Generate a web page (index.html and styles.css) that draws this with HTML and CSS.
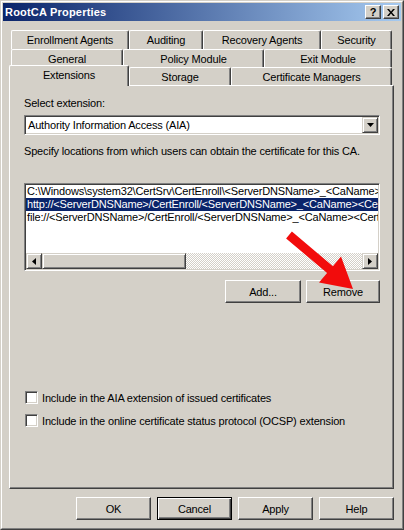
FILE: index.html
```html
<!DOCTYPE html>
<html>
<head>
<meta charset="utf-8">
<link rel="stylesheet" href="styles.css">
</head>
<body>
<div class="window">
  <div class="frame">
    <div class="titlebar">
      <span class="title">RootCA Properties</span>
      <div class="caps">
        <div class="capbtn">?</div>
        <div class="capbtn x">
          <svg width="8" height="7" viewBox="0 0 8 7"><path d="M0 0h2l2 2.5L6 0h2L5 3.5 8 7H6L4 4.5 2 7H0l3-3.5z" fill="#000"/></svg>
        </div>
      </div>
    </div>
    <div class="body">
      <div class="tabs">
        <div class="tabrow r1">
          <div class="tab" style="width:118px">Enrollment Agents</div>
          <div class="tab" style="width:74px">Auditing</div>
          <div class="tab" style="width:118px">Recovery Agents</div>
          <div class="tab" style="width:71px">Security</div>
        </div>
        <div class="tabrow r2">
          <div class="tab" style="width:112px">General</div>
          <div class="tab" style="width:141px">Policy Module</div>
          <div class="tab" style="width:128px">Exit Module</div>
        </div>
        <div class="tabrow r3">
          <div class="tab sel" style="width:120px">Extensions</div>
          <div class="tab" style="width:102px">Storage</div>
          <div class="tab" style="width:161px">Certificate Managers</div>
        </div>
      </div>
      <div class="panel">
        <div class="label">Select extension:</div>
        <div class="combo">
          <span class="combo-text">Authority Information Access (AIA)</span>
          <div class="dropbtn"><svg width="7" height="4" viewBox="0 0 7 4"><path d="M0 0h7L3.5 4z" fill="#000"/></svg></div>
        </div>
        <div class="desc">Specify locations from which users can obtain the certificate for this CA.</div>
        <div class="listbox">
          <div class="items">
            <div class="item">C:\Windows\system32\CertSrv\CertEnroll\&lt;ServerDNSName&gt;_&lt;CaName&gt;&lt;CertificateName&gt;.crt</div>
            <div class="item on">http://&lt;ServerDNSName&gt;/CertEnroll/&lt;ServerDNSName&gt;_&lt;CaName&gt;&lt;CertificateName&gt;.crt</div>
            <div class="item">file://&lt;ServerDNSName&gt;/CertEnroll/&lt;ServerDNSName&gt;_&lt;CaName&gt;&lt;CertificateName&gt;.crt</div>
          </div>
          <div class="hscroll">
            <div class="sbtn"><svg width="4" height="7" viewBox="0 0 4 7"><path d="M4 0v7L0 3.5z" fill="#000"/></svg></div>
            <div class="thumb"></div>
            <div class="track"></div>
            <div class="sbtn"><svg width="4" height="7" viewBox="0 0 4 7"><path d="M0 0v7L4 3.5z" fill="#000"/></svg></div>
          </div>
        </div>
        <div class="btnrow">
          <div class="btn add">Add...</div>
          <div class="btn remove">Remove</div>
        </div>
        <div class="checks">
          <div class="check"><span class="box"></span><span>Include in the AIA extension of issued certificates</span></div>
          <div class="check"><span class="box"></span><span>Include in the online certificate status protocol (OCSP) extension</span></div>
        </div>
      </div>
      <div class="footer">
        <div class="btn">OK</div>
        <div class="btn default">Cancel</div>
        <div class="btn">Apply</div>
        <div class="btn">Help</div>
      </div>
    </div>
  </div>
  <svg class="arrow" width="404" height="530" viewBox="0 0 404 530">
    <polygon points="291.9,231.6 332.9,266.2 341,256.6 353,289 319,282.6 327.1,273 286.1,238.4" fill="#f20c0c"/>
  </svg>
</div>
</body>
</html>
```

FILE: styles.css
```css
* { box-sizing: border-box; }
html, body { margin: 0; padding: 0; }
body {
  width: 404px;
  height: 530px;
  background: #d4d0c8;
  font-family: "Liberation Sans", Arial, sans-serif;
  font-size: 11px;
  letter-spacing: -0.17px;
  color: #000;
  overflow: hidden;
}
.window {
  position: relative;
  width: 404px;
  height: 530px;
  border: 1px solid;
  border-color: #d4d0c8 #404040 #404040 #d4d0c8;
}
.frame {
  height: 100%;
  border: 1px solid;
  border-color: #fff #808080 #808080 #fff;
  padding: 1px;
  display: flex;
  flex-direction: column;
}
.titlebar {
  height: 18px;
  flex: none;
  background: linear-gradient(to right, #0a246a, #a6caf0);
  display: flex;
  align-items: center;
  justify-content: space-between;
  padding: 0 2px 0 2px;
}
.title {
  color: #fff;
  font-weight: bold;
  font-size: 11px;
  letter-spacing: 0.2px;
}
.caps { display: flex; gap: 2px; }
.capbtn {
  width: 16px;
  height: 14px;
  background: #d4d0c8;
  border: 1px solid;
  border-color: #fff #404040 #404040 #fff;
  box-shadow: inset -1px -1px #808080;
  display: flex;
  align-items: center;
  justify-content: center;
  font-weight: bold;
  font-size: 11px;
  line-height: 1;
  letter-spacing: 0;
}
.body {
  flex: 1;
  padding: 9px 7px 0 6px;
  display: flex;
  flex-direction: column;
}
.tabs { display: flex; flex-direction: column; }
.tabrow { display: flex; padding-left: 2px; }
.tabrow.r1 { height: 19px; }
.tabrow.r2 { height: 18px; }
.tabrow.r3 { height: 18px; align-items: flex-end; }
.tab {
  height: 100%;
  border-top: 1px solid #fff;
  border-left: 1px solid #fff;
  border-right: 1px solid #404040;
  box-shadow: inset -1px 0 #808080;
  border-radius: 2px 2px 0 0;
  display: flex;
  align-items: center;
  justify-content: center;
  white-space: nowrap;
  background: #d4d0c8;
}
.tab.sel {
  height: 21px;
  margin-left: -2px;
  margin-bottom: -1px;
  position: relative;
  z-index: 1;
  padding-bottom: 3px;
}
.panel {
  width: 385px;
  height: 404px;
  flex: none;
  border: 1px solid;
  border-color: #fff #404040 #404040 #fff;
  box-shadow: inset -1px -1px #808080;
  padding: 11px 13px 0 14px;
  display: flex;
  flex-direction: column;
}
.label { line-height: 13px; }
.combo {
  margin-top: 5px;
  height: 20px;
  background: #fff;
  border: 1px solid;
  border-color: #808080 #fff #fff #808080;
  box-shadow: inset 1px 1px #404040, inset -1px -1px #d4d0c8;
  padding: 1px;
  display: flex;
  align-items: center;
  justify-content: space-between;
}
.combo-text { padding-left: 2px; }
.dropbtn {
  width: 16px;
  height: 16px;
  background: #d4d0c8;
  border: 1px solid;
  border-color: #d4d0c8 #404040 #404040 #d4d0c8;
  box-shadow: inset 1px 1px #fff, inset -1px -1px #808080;
  display: flex;
  align-items: center;
  justify-content: center;
}
.desc { margin-top: 10px; line-height: 13px; white-space: nowrap; }
.listbox {
  margin-top: 25px;
  height: 88px;
  background: #fff;
  border: 1px solid;
  border-color: #808080 #fff #fff #808080;
  box-shadow: inset 1px 1px #404040, inset -1px -1px #d4d0c8;
  padding: 1px;
  display: flex;
  flex-direction: column;
}
.items { flex: 1; overflow: hidden; }
.item {
  height: 13px;
  line-height: 13px;
  white-space: nowrap;
  padding-left: 1px;
  overflow: hidden;
}
.item.on { background: #0a246a; color: #fff; }
.hscroll { height: 16px; display: flex; }
.sbtn {
  width: 16px;
  height: 16px;
  flex: none;
  background: #d4d0c8;
  border: 1px solid;
  border-color: #d4d0c8 #404040 #404040 #d4d0c8;
  box-shadow: inset 1px 1px #fff, inset -1px -1px #808080;
  display: flex;
  align-items: center;
  justify-content: center;
}
.thumb {
  width: 144px;
  flex: none;
  background: #d4d0c8;
  border: 1px solid;
  border-color: #d4d0c8 #404040 #404040 #d4d0c8;
  box-shadow: inset 1px 1px #fff, inset -1px -1px #808080;
}
.track {
  flex: 1;
  background-color: #d4d0c8;
  background-image: conic-gradient(#fff 25%, #d4d0c8 0 50%, #fff 0 75%, #d4d0c8 0);
  background-size: 2px 2px;
}
.btn {
  width: 75px;
  height: 23px;
  background: #d4d0c8;
  border: 1px solid;
  border-color: #fff #404040 #404040 #fff;
  box-shadow: inset -1px -1px #808080;
  display: flex;
  align-items: center;
  justify-content: center;
}
.btn.default {
  border-color: #000;
  box-shadow: inset 1px 1px #fff, inset -1px -1px #404040, inset -2px -2px #808080;
}
.btnrow {
  margin-top: 9px;
  display: flex;
  justify-content: flex-end;
  gap: 5px;
}
.btn.add { width: 76px; }
.btn.remove { width: 74px; }
.checks {
  margin-top: 88px;
  display: flex;
  flex-direction: column;
  gap: 10px;
}
.check {
  display: flex;
  align-items: center;
  height: 13px;
  gap: 4px;
  padding-left: 1px;
}
.box {
  width: 13px;
  height: 13px;
  flex: none;
  background: #fff;
  border: 1px solid;
  border-color: #808080 #fff #fff #808080;
  box-shadow: inset 1px 1px #404040, inset -1px -1px #d4d0c8;
}
.footer {
  margin-top: 8px;
  display: flex;
  justify-content: flex-end;
  gap: 6px;
}
.arrow {
  position: absolute;
  left: -1px;
  top: -1px;
  pointer-events: none;
}
```
